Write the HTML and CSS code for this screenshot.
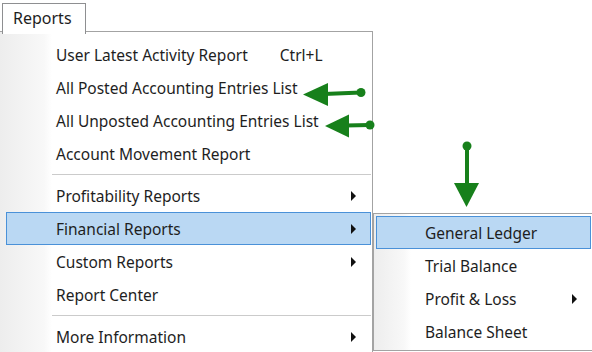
FILE: index.html
```html
<!DOCTYPE html>
<html lang="en">
<head>
  <meta charset="UTF-8">
  <title>Reports Menu</title>
  <link rel="stylesheet" href="styles.css">
</head>
<body>

  <!-- Menu bar tab -->
  <div class="menubar">
    <div class="tab">Reports</div>
  </div>

  <!-- Reports drop-down -->
  <div class="menu">
    <div class="item"><span class="label">User Latest Activity Report</span><span class="shortcut">Ctrl+L</span></div>
    <div class="item"><span class="label">All Posted Accounting Entries List</span></div>
    <div class="item"><span class="label">All Unposted Accounting Entries List</span></div>
    <div class="item"><span class="label">Account Movement Report</span></div>
    <div class="sep"></div>
    <div class="item has-sub"><span class="label">Profitability Reports</span><span class="arrow"></span></div>
    <div class="item has-sub active"><span class="label">Financial Reports</span><span class="arrow"></span></div>
    <div class="item has-sub"><span class="label">Custom Reports</span><span class="arrow"></span></div>
    <div class="item"><span class="label">Report Center</span></div>
    <div class="sep"></div>
    <div class="item has-sub"><span class="label">More Information</span><span class="arrow"></span></div>
  </div>

  <!-- Financial Reports sub menu -->
  <div class="submenu">
    <div class="item active"><span class="label">General Ledger</span></div>
    <div class="item"><span class="label">Trial Balance</span></div>
    <div class="item has-sub"><span class="label">Profit &amp; Loss</span><span class="arrow"></span></div>
    <div class="item"><span class="label">Balance Sheet</span></div>
  </div>

  <!-- Green pointer annotations -->
  <svg class="notes" width="592" height="352" viewBox="0 0 592 352">
    <g fill="#17801b" stroke="#17801b">
      <line x1="324" y1="94" x2="361" y2="92.5" stroke-width="4"/>
      <polygon points="303,94.5 328,83 328,106" stroke="none"/>
      <circle cx="361" cy="92.5" r="4.5" stroke="none"/>

      <line x1="345" y1="125.5" x2="370" y2="125" stroke-width="4"/>
      <polygon points="325,126 349,114.5 349,137.5" stroke="none"/>
      <circle cx="370" cy="125" r="4.5" stroke="none"/>

      <line x1="467" y1="146" x2="467" y2="186" stroke-width="4"/>
      <polygon points="454,183 479,183 466.5,207" stroke="none"/>
      <circle cx="467" cy="146" r="4.5" stroke="none"/>
    </g>
  </svg>

</body>
</html>
```

FILE: styles.css
```css
/* General */
body {
  margin: 0;
  width: 592px;
  height: 352px;
  overflow: hidden;
  position: relative;
  background: #ffffff;
  font-family: "Noto Sans", "Open Sans", sans-serif;
  font-size: 15.5px;
  color: #1e1e1e;
}

/* Menu bar */
.menubar {
  padding: 3px 0 0 2px;
  position: relative;
  z-index: 3;
}

.tab {
  width: 84px;
  height: 31px;
  box-sizing: border-box;
  border: 1px solid #8e8f91;
  border-bottom: none;
  background: #ffffff;
  padding: 3px 0 0 10px;
  font-size: 16px;
}

/* Drop-down menu */
.menu {
  position: absolute;
  left: 0;
  top: 31px;
  width: 373px;
  height: 321px;
  overflow: hidden;
  box-sizing: border-box;
  border-top: 1px solid #a3a3a3;
  border-right: 1px solid #a3a3a3;
  padding: 6px 1px 0 6px;
  background: linear-gradient(to right, #ededed 0, #f8f8f8 44px, #ffffff 52px);
  z-index: 1;
}

.item {
  height: 33px;
  box-sizing: border-box;
  border: 1px solid transparent;
  display: flex;
  align-items: center;
  padding-left: 49px;
  position: relative;
}

.item.active {
  background: #bad8f3;
  border-color: #4a91d8;
}

.shortcut {
  margin-left: 32px;
}

.arrow {
  position: absolute;
  right: 14px;
  top: 11px;
  width: 0;
  height: 0;
  border-top: 5px solid transparent;
  border-bottom: 5px solid transparent;
  border-left: 5px solid #111111;
}

.sep {
  height: 9px;
  margin-left: 46px;
  background: linear-gradient(#ffffff 4px, #cbcbcb 4px, #cbcbcb 5px, #ffffff 5px);
}

/* Sub menu */
.submenu {
  position: absolute;
  left: 373px;
  top: 213px;
  width: 221px;
  height: 138px;
  box-sizing: border-box;
  border: 1px solid #a3a3a3;
  padding: 2px 2px 0 2px;
  background: linear-gradient(to right, #ededed 0, #f8f8f8 30px, #ffffff 37px);
  z-index: 2;
}

.submenu .item {
  padding-left: 48px;
}

.submenu .arrow {
  right: 13px;
}

/* Annotations */
.notes {
  position: absolute;
  left: 0;
  top: 0;
  z-index: 5;
  pointer-events: none;
}
```
